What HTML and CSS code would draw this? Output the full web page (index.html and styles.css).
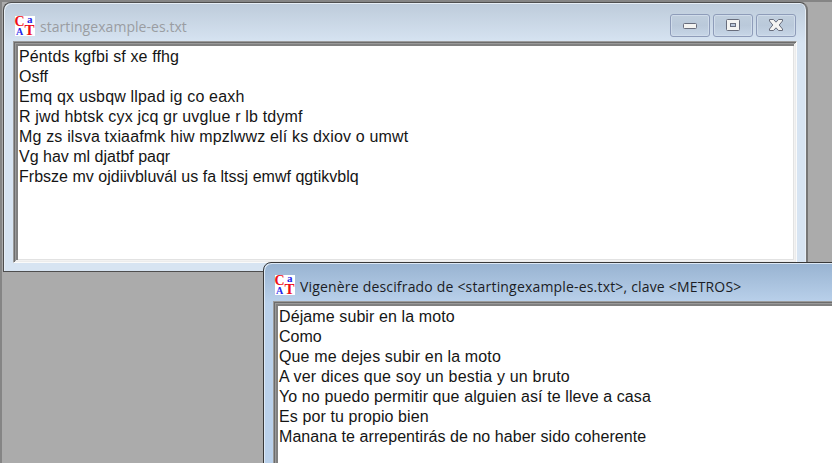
FILE: index.html
```html
<!DOCTYPE html>
<html lang="es">
<head>
<meta charset="utf-8">
<title>CAT</title>
<link rel="stylesheet" href="styles.css">
</head>
<body>
<main class="workspace">
  <section class="window window-source">
    <header class="titlebar">
      <svg class="app-icon" viewBox="0 0 20 20" aria-hidden="true">
        <rect width="20" height="20" fill="#fff"/>
        <g font-family="Liberation Serif, serif" font-weight="bold">
          <text x="-0.5" y="10" font-size="14" fill="#f00d18">C</text>
          <text x="12" y="7" font-size="11" fill="#2525e8">a</text>
          <text x="1" y="19" font-size="10" fill="#2525e8">A</text>
          <text x="9.500" y="19" font-size="15" fill="#f00d18">T</text>
        </g>
      </svg>
      <h1 class="title">startingexample-es.txt</h1>
      <div class="controls">
        <button class="control" aria-label="Minimizar"><svg viewBox="0 0 16 14"><rect x="1.500" y="5.500" width="13" height="5" rx="1" fill="#f4f4f2" stroke="#686d7c"/></svg></button>
        <button class="control" aria-label="Maximizar"><svg viewBox="0 0 16 14"><rect x="1.500" y="1.500" width="13" height="11" rx="1" fill="#f4f4f2" stroke="#686d7c"/><rect x="5.500" y="5.500" width="5" height="3" fill="#b9c6d9" stroke="#686d7c"/></svg></button>
        <button class="control" aria-label="Cerrar"><svg viewBox="0 0 16 14"><path d="M1.500 1.500H5.500L8 4.200 10.500 1.500H14.500V3L11.200 7 14.500 11V12.500H10.500L8 9.800 5.500 12.500H1.500V11L4.800 7 1.500 3Z" fill="#f4f4f2" stroke="#686d7c" stroke-linejoin="round"/></svg></button>
      </div>
    </header>
    <div class="editor">
      <p>Péntds kgfbi sf xe ffhg</p>
      <p>Osff</p>
      <p>Emq qx usbqw llpad ig co eaxh</p>
      <p>R jwd hbtsk cyx jcq gr uvglue r lb tdymf</p>
      <p>Mg zs ilsva txiaafmk hiw mpzlwwz elí ks dxiov o umwt</p>
      <p>Vg hav ml djatbf paqr</p>
      <p>Frbsze mv ojdiivbluvál us fa ltssj emwf qgtikvblq</p>
    </div>
  </section>
  <section class="window window-result">
    <header class="titlebar">
      <svg class="app-icon" viewBox="0 0 20 20" aria-hidden="true">
        <rect width="20" height="20" fill="#fff"/>
        <g font-family="Liberation Serif, serif" font-weight="bold">
          <text x="-0.5" y="10" font-size="14" fill="#f00d18">C</text>
          <text x="12" y="7" font-size="11" fill="#2525e8">a</text>
          <text x="1" y="19" font-size="10" fill="#2525e8">A</text>
          <text x="9.500" y="19" font-size="15" fill="#f00d18">T</text>
        </g>
      </svg>
      <h2 class="title">Vigenère descifrado de &lt;startingexample-es.txt&gt;, clave &lt;METROS&gt;</h2>
    </header>
    <div class="editor">
      <p>Déjame subir en la moto</p>
      <p>Como</p>
      <p>Que me dejes subir en la moto</p>
      <p>A ver dices que soy un bestia y un bruto</p>
      <p>Yo no puedo permitir que alguien así te lleve a casa</p>
      <p>Es por tu propio bien</p>
      <p>Manana te arrepentirás de no haber sido coherente</p>
    </div>
  </section>
</main>
</body>
</html>
```
FILE: styles.css
```css
* { box-sizing: border-box; }
body { margin: 0; }
.workspace {
  position: relative;
  width: 832px;
  height: 463px;
  overflow: hidden;
  background: #ababab;
  border-top: 2px solid #858585;
  border-left: 2px solid #858585;
}
.window {
  position: absolute;
  display: flex;
  flex-direction: column;
  border: 1px solid #4e4e4e;
}
.window-source {
  left: 1px;
  top: 0;
  width: 805px;
  height: 270px;
  padding: 0 9px 8px 9px;
  border-right: 2px solid #767676;
  border-radius: 8px 8px 0 0;
  background: linear-gradient(#bdcbda, #d7e4f2 40px);
  box-shadow: inset 1px 1px #e6eef6, inset -1px 0 #e6eef6;
}
.window-result {
  left: 261px;
  top: 260px;
  width: 640px;
  height: 260px;
  padding: 0 9px 8px 9px;
  border-color: #383838;
  border-radius: 8px 8px 0 0;
  background: linear-gradient(#98b3d1, #bad1eb 40px);
  box-shadow: inset 1px 1px #dce8f5;
}
.titlebar {
  display: flex;
  align-items: center;
  flex: none;
  height: 38px;
}
.app-icon { flex: none; overflow: visible; width: 20px; height: 20px; margin: 8px 5px 0 2px; }
.window-result .app-icon { margin: 6px 5px 0 2px; }
.title {
  margin: 9px 0 0;
  font: 14px/20px "Open Sans", sans-serif;
  letter-spacing: 0.05px;
  color: #9a9da2;
  white-space: nowrap;
}
.window-result .title { letter-spacing: 0.18px; color: #1b1d25; }
.controls { display: flex; gap: 3px; margin: 7px 1px 0 auto; }
.control {
  display: flex;
  align-items: center;
  justify-content: center;
  width: 40px;
  height: 23px;
  padding: 0 0 1px;
  border: 1px solid #8e9cb9;
  border-radius: 3px;
  background: linear-gradient(#c0cedd, #bac9da 50%, #c7d6e7);
  box-shadow: inset 0 0 0 1px #d0dcea;
}
.control svg { flex: none; width: 16px; height: 14px; }
.editor {
  flex: 1;
  padding: 5px;
  background: #fff;
  border: 1px solid;
  border-color: #9b9b9b #fafafa #fafafa #9b9b9b;
  box-shadow:
    inset 1px 1px #6c6c6c, inset -1px -1px #ececec,
    inset 2px 2px #9a9a9a, inset -2px -2px #f2f2f2,
    inset 4px 4px #808080, inset -3px -3px #e2e2e2;
  font: 16px/20px "Liberation Sans", Arial, sans-serif;
  color: #151515;
}
.editor p { margin: 0; white-space: nowrap; }

/* Tracking per line of each document */
.window-source p:nth-child(1) { letter-spacing: 0.13px; }
.window-source p:nth-child(3),
.window-source p:nth-child(5) { letter-spacing: 0.17px; }
.window-source p:nth-child(4) { letter-spacing: 0.18px; }
.window-source p:nth-child(7) { letter-spacing: 0.02px; }
.window-result p:nth-child(1),
.window-result p:nth-child(5),
.window-result p:nth-child(6) { letter-spacing: 0.1px; }
.window-result p:nth-child(3) { letter-spacing: 0.14px; }
.window-result p:nth-child(4) { letter-spacing: 0.18px; }
.window-result p:nth-child(7) { letter-spacing: 0.05px; }
```
